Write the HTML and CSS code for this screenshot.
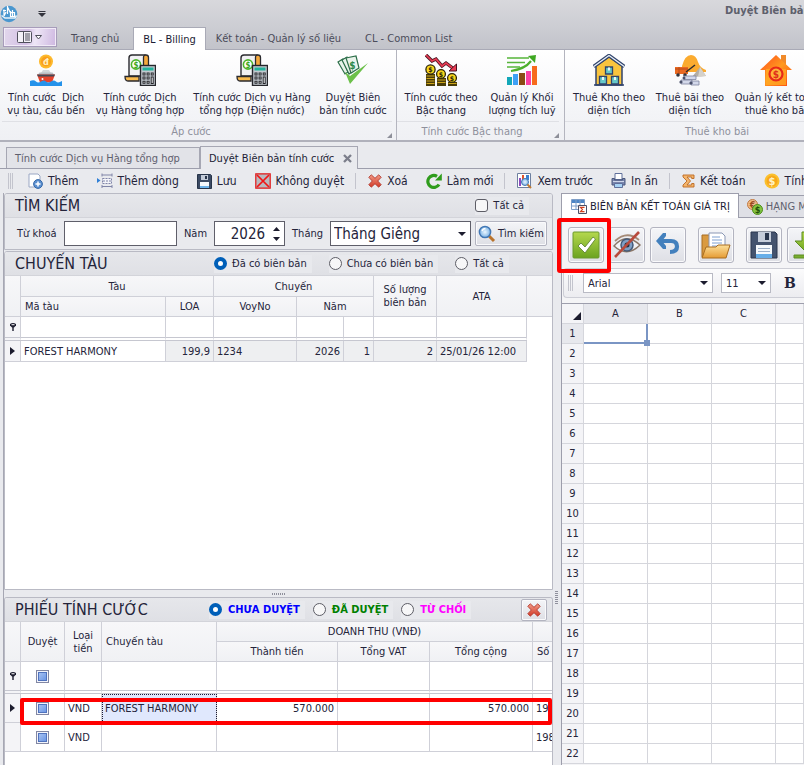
FILE: index.html
```
<!DOCTYPE html>
<html lang="vi">
<head>
<meta charset="utf-8">
<title>Duyệt Biên bản tính cước</title>
<link rel="stylesheet" href="styles.css">
</head>
<body>
<svg class="defs" aria-hidden="true">
  <defs>
    <linearGradient id="gFire" x1="0" y1="0" x2="1" y2="1"><stop offset="0" stop-color="#ff4a1c"/><stop offset=".5" stop-color="#ff9a1f"/><stop offset="1" stop-color="#ff4a10"/></linearGradient>
    <linearGradient id="gGreen" x1="0" y1="0" x2="0" y2="1"><stop offset="0" stop-color="#b5d84e"/><stop offset="1" stop-color="#6ba31f"/></linearGradient>
    <linearGradient id="gFold" x1="0" y1="0" x2="0" y2="1"><stop offset="0" stop-color="#fde09a"/><stop offset="1" stop-color="#e59b34"/></linearGradient>
    <radialGradient id="gLens"><stop offset="0" stop-color="#eaf6ff"/><stop offset="1" stop-color="#7db4e6"/></radialGradient>
    <linearGradient id="gRed" x1="0" y1="0" x2="0" y2="1"><stop offset="0" stop-color="#f29a86"/><stop offset="1" stop-color="#d23a28"/></linearGradient>
    <symbol id="calc" viewBox="0 0 32 32">
      <path d="M5 22V4q0-3 3-3h13v21z" fill="#f1f1f3" stroke="#2a2a2e" stroke-width="1.4"/>
      <path d="M19.500 12V3.500q0-2.500 2.500-2.500t2.500 2.500V12z" fill="#f5a93c" stroke="#2a2a2e" stroke-width="1.300"/>
      <circle cx="12" cy="10.500" r="4.600" fill="#fff" stroke="#4db62c" stroke-width="1.600"/>
      <text x="12" y="13.500" font-size="8" font-weight="bold" text-anchor="middle" fill="#3fa622">$</text>
      <path d="M1 22.500h14v4.500H4q-3 0-3-4.500z" fill="#f9bb4e" stroke="#2a2a2e" stroke-width="1.300"/>
      <rect x="16.500" y="11.500" width="15" height="20" fill="#c3c9cf" stroke="#25262b" stroke-width="1.400"/>
      <rect x="18.500" y="13.500" width="11" height="3" fill="#22b39c"/>
      <g fill="#25262b"><path d="M18.500 18.500h3v3h-3zM22.600 18.500h3v3h-3zM26.700 18.500h3v3h-3zM18.500 22.600h3v3h-3zM22.600 22.600h3v3h-3zM26.700 22.600h3v7.300h-3zM18.500 26.800h3v3h-3zM22.600 26.800h3v3h-3z"/></g>
      <g fill="#f2f4f6"><path d="M19.500 19.500h1v1h-1zM23.600 19.500h1v1h-1zM27.700 19.500h1v1h-1zM19.500 23.600h1v1h-1zM23.600 23.600h1v1h-1zM27.700 23.600h1v5.300h-1zM19.500 27.800h1v1h-1zM23.600 27.800h1v1h-1z"/></g>
    </symbol>
    <symbol id="pin" viewBox="0 0 8 10"><path d="M1 2q3-2 6 0v1.500L5 5.500H3L1 3.500z" fill="#1c1c2e"/><path d="M2.500 2.200h3v1h-3z" fill="#fff"/><path d="M3.300 5h1.400v4H3.300z" fill="#1c1c2e"/></symbol>
    <symbol id="cross" viewBox="0 0 14 14"><path d="M3.300.8 7 4.300 10.700.8l2.500 2.500L9.700 7l3.500 3.700-2.500 2.500L7 9.700l-3.700 3.500-2.500-2.500L4.300 7 .8 3.300z" fill="url(#gRed)" stroke="#b23a30" stroke-width=".9"/></symbol>
  </defs>
</svg>

<header class="titlebar">
  <svg class="logo" width="18" height="18" viewBox="0 0 18 18"><circle cx="9" cy="9" r="8.300" fill="#4a97cf"/><path d="M7.500 1v8M4 4.500v6.500M3 5.500h3M6 7l-2 4M7.500 2 11 9M10.500 6v6M12.500 5v7M10.500 7.500h4v4h-4" stroke="#fff" stroke-width="1.200" fill="none"/><path d="M1.500 10.500 5 13h10l1.500-2.500" stroke="#e6f3fb" stroke-width="1.500" fill="none"/></svg>
  <svg class="quick" width="8" height="6" viewBox="0 0 8 6"><path d="M.5 0h7v1h-7zM0 2h8L4 6z" fill="#33343d"/></svg>
  <h1 class="title">Duyệt Biên bản</h1>
</header>

<nav class="tabs">
  <button class="appbtn" aria-label="Menu">
    <svg width="26" height="12" viewBox="0 0 26 12"><rect x=".5" y=".5" width="14" height="11" rx="1" fill="#f4f2f8" stroke="#50505c"/><path d="M6.500 1v10" stroke="#50505c"/><path d="M8 3h5M8 5h5M8 7h5M8 9h5" stroke="#50505c"/><path d="M18.500 4.500h6L21.500 8z" fill="#fff" stroke="#50505c"/></svg>
  </button>
  <a class="tab" href="#home">Trang chủ</a>
  <a class="tab on" href="#billing">BL - Billing</a>
  <a class="tab" href="#settle">Kết toán - Quản lý số liệu</a>
  <a class="tab" href="#common">CL - Common List</a>
</nav>

<section class="ribbon">
  <div class="group">
    <div class="items">
      <button class="big w88"><svg width="32" height="32" viewBox="0 0 32 32"><circle cx="16" cy="7.500" r="7" fill="#fdb92c"/><circle cx="16" cy="7.500" r="5" fill="#f9a01b"/><text x="16" y="11" font-size="9" font-weight="bold" text-anchor="middle" fill="#fff0c0">đ</text><path d="M13 16h6l2 3H11z" fill="#d3d6da"/><path d="M9.500 18.500h13l1.500 2H8z" fill="#b9bdc4"/><path d="M7 20.500h18l-3 8H10z" fill="#e5432d"/><path d="M7 20.500h18l-1 2H8z" fill="#454a57"/><circle cx="12.500" cy="25" r="1" fill="#fff"/><path d="M0 27q4-1.500 6 .500t5 0 5 0 5 0 5 0 6-.500v5H0z" fill="#2492ea"/></svg><span>Tính cước&nbsp; Dịch<br>vụ tàu, cầu bến</span></button>
      <button class="big w100"><svg width="32" height="32"><use href="#calc"/></svg><span>Tính cước Dịch<br>vụ Hàng tổng hợp</span></button>
      <button class="big w124"><svg width="32" height="32"><use href="#calc"/></svg><span>Tính cước Dịch vụ Hàng<br>tổng hợp (Điện nước)</span></button>
      <button class="big w78"><svg width="32" height="32" viewBox="0 0 32 32"><g fill="#e9f3ea" stroke="#2c6e49" stroke-width="1.200"><path d="m1 8 5-3 5 13-3 2z"/><path d="m5 6 5-3 6 14-4 3z"/><path d="m9 4 10-2 3 12-8 5z"/></g><text x="15.500" y="14.500" font-size="10" font-weight="bold" text-anchor="middle" fill="#2c8a4a">$</text><path d="M8 18 13 22 31 9 13 30z" fill="#6cc04a"/></svg><span>Duyệt Biên<br>bản tính cước</span></button>
    </div>
    <div class="caption"><span>Áp cước</span><svg class="launch" width="5" height="5" viewBox="0 0 5 5"><path d="M5 0v5H0z" fill="#8d8f99"/></svg></div>
  </div>
  <div class="group">
    <div class="items">
      <button class="big w88"><svg width="32" height="32" viewBox="0 0 32 32"><g fill="#4a3d08"><path d="M1 20h9v12H1zM12 24h9v8h-9zM23 28h9v4h-9z"/></g><path d="M1.500 22h8M1.500 24.500h8M1.500 27h8M1.500 29.500h8M12.500 26h8M12.500 28.500h8M23.500 29.500h8" stroke="#cda51a"/><g fill="#f9d71c" stroke="#2d2508" stroke-width="1.300"><circle cx="5.500" cy="15.500" r="4.600"/><circle cx="16" cy="20" r="4.400"/><circle cx="27" cy="24" r="4.400"/></g><g font-size="7" font-weight="bold" text-anchor="middle" fill="#2d2508"><text x="5.500" y="18">$</text><text x="16" y="22.500">$</text><text x="27" y="26.500">$</text></g><path d="m1 1 6 6 4-2 6 7 4-3 8 6" fill="none" stroke="#4a1420" stroke-width="3.400"/><path d="m1 1 6 6 4-2 6 7 4-3 8 6" fill="none" stroke="#ea3d55" stroke-width="1.700"/><path d="M31.500 10v7H24z" fill="#ea3d55" stroke="#4a1420"/></svg><span>Tính cước theo<br>Bậc thang</span></button>
      <button class="big w74"><svg width="32" height="32" viewBox="0 0 32 32"><path d="M1 4h22M1 8.500h18M1 13h13" stroke="#56b53a" stroke-width="1.300"/><path d="M5 17Q19 15 25 7" fill="none" stroke="#4db02c" stroke-width="2.200"/><path d="M22 2l8-1-1 8z" fill="#3fa822"/><path d="M1 23h5v8H1z" fill="#12a7b8"/><path d="M7 20h5v11H7z" fill="#3ea0f5"/><path d="M13 19h6v12h-6z" fill="#8a4a14"/><path d="M20 17h5v14h-5z" fill="#fb3fa5"/><path d="M26 12h5v19h-5z" fill="#f76a1c"/></svg><span>Quản lý Khối<br>lượng tích luỹ</span></button>
    </div>
    <div class="caption"><span>Tính cước Bậc thang</span><svg class="launch" width="5" height="5" viewBox="0 0 5 5"><path d="M5 0v5H0z" fill="#8d8f99"/></svg></div>
  </div>
  <div class="group last">
    <div class="items">
      <button class="big w88"><svg width="32" height="32" viewBox="0 0 32 32"><path d="M3 12 16 3l13 9v19H3z" fill="#f9c43e" stroke="#31436b" stroke-width="1.500"/><path d="M.8 12.500 16 1.500l15.200 11" fill="none" stroke="#31436b" stroke-width="3.600"/><path d="M.8 12.500 16 1.500l15.200 11" fill="none" stroke="#e9f1f8" stroke-width="1.300"/><g fill="#66c8c8" stroke="#31436b" stroke-width="1.300"><path d="M12.500 13h7v7h-7zM6.500 22.500h7V30h-7zM18.500 22.500h7V30h-7z"/></g><path d="M15 13.500h2v3h-2zM9 23h2v3H9zM21 23h2v3h-2z" fill="#e9f7f7"/><path d="M1 31h30" stroke="#31436b" stroke-width="1.500"/></svg><span>Thuê Kho theo<br>diện tích</span></button>
      <button class="big w74"><svg width="32" height="32" viewBox="0 0 32 32"><path d="M8 12Q11 1 17 1q5 0 7 7 2 6 8 8v2H8z" fill="#fbab2f"/><path d="m18 23 8-10 6 9z" fill="#b3aea6"/><path d="m26 13 6 9-8 1z" fill="#d5d1ca"/><path d="M1 13h13v7H1z" fill="#ea6a22"/><path d="M1 15h13M5 13v7" stroke="#b84a18"/><path d="m12 18 9-7" stroke="#2c2c30" stroke-width="1.500"/><circle cx="4" cy="21" r="1.800" fill="#33343c"/><circle cx="11" cy="21" r="1.800" fill="#33343c"/><g fill="#d3d8ea" stroke="#7d849e" stroke-width=".8"><path d="M10 22h12v3.500H10zM7 26h11v4H7zM17 27h8v4h-8z"/></g><g fill="#4b516b"><circle cx="10" cy="24" r="1.500"/><circle cx="7" cy="28" r="1.600"/><circle cx="17" cy="29" r="1.600"/></g></svg><span>Thuê bãi theo<br>diện tích</span></button>
      <button class="big w98"><svg width="32" height="32" viewBox="0 0 32 32"><path d="M21 1h5v10h-5z" fill="#f08a2a"/><path d="M16 1 32 16h-5v16H5V16H0z" fill="url(#gFire)"/><path d="M6 15h20v16H6z" fill="#ffab24" opacity=".75"/><circle cx="16" cy="20" r="6.500" fill="#ffb43a" stroke="#e8291a" stroke-width="2.200"/><text x="16" y="23.800" font-size="10" font-weight="bold" text-anchor="middle" fill="#e0301a">$</text></svg><span>Quản lý kết toán<br>thuê kho bãi</span></button>
    </div>
    <div class="caption"><span>Thuê kho bãi</span></div>
  </div>
</section>

<nav class="docs">
  <a class="doc" href="#general">Tính cước Dịch vụ Hàng tổng hợp</a>
  <a class="doc on" href="#approve">Duyệt Biên bản tính cước <svg width="9" height="9" viewBox="0 0 9 9"><path d="m1 1 7 7M8 1 1 8" stroke="#7c7e8b" stroke-width="2.300"/></svg></a>
</nav>

<div class="toolbar">
  <span class="grip"></span>
  <button><svg width="15" height="16" viewBox="0 0 15 16"><path d="M1 1h9l2 2v11H1z" fill="#fff" stroke="#9aa7c4"/><circle cx="10" cy="11" r="4.400" fill="#5a8fd0" stroke="#3568a8"/><path d="M10 8.500v5M7.500 11h5" stroke="#fff" stroke-width="1.500"/></svg>Thêm</button>
  <button><svg width="16" height="16" viewBox="0 0 16 16"><path d="m0 5 3.500 2.500L0 10z" fill="#2f7fd6"/><path d="M5 2h10M5 13.500h10M5 .5v3M15 .5v3M5 12v3M15 12v3" stroke="#8085a8" fill="none"/><path d="M5.500 5.500h9v5h-9z" fill="#f4f5fa" stroke="#8085a8" stroke-dasharray="2 1"/><path d="M6 8h8" stroke="#8085a8" stroke-dasharray="2 1"/></svg>Thêm dòng</button>
  <button><svg width="15" height="15" viewBox="0 0 15 15"><path d="M.5.5h13l1 1v13H.5z" fill="#3b4a63" stroke="#273449"/><path d="M4 1h7v5H4z" fill="#c3cbd8"/><path d="M8 2h2v3H8z" fill="#273449"/><path d="M3 8h9v6H3z" fill="#f4f8fc"/><path d="M3 12h9v2H3z" fill="#6db3ea"/></svg>Lưu</button>
  <button><svg width="16" height="16" viewBox="0 0 16 16"><path d="M.8.8h14.400v14.400H.8z" fill="#b9b9be" stroke="#e31616" stroke-width="1.200"/><path d="m2 2 12 12M14 2 2 14" stroke="#f21414" stroke-width="1.700"/></svg>Không duyệt</button>
  <span class="sep"></span>
  <button><svg width="14" height="14"><use href="#cross"/></svg>Xoá</button>
  <button><svg width="16" height="16" viewBox="0 0 16 16"><path d="M13 11.500A6 6 0 1 1 11 3.300" fill="none" stroke="#2f9c1c" stroke-width="3.200"/><path d="M15.800.5v7H9z" fill="#2f9c1c"/></svg>Làm mới</button>
  <span class="sep"></span>
  <button><svg width="15" height="16" viewBox="0 0 15 16"><path d="M.5.5h13v14H.5z" fill="#fff" stroke="#6d7f9f"/><path d="M2 5h2v8H2z" fill="#8d4ac0"/><path d="M5 2h2v6H5z" fill="#e0532c"/><path d="M9 2h3v5H9z" fill="#3c7fd0"/><circle cx="8" cy="9" r="3.500" fill="url(#gLens)" stroke="#4277b4"/><path d="m10.500 11.500 3.500 3.500" stroke="#c07a30" stroke-width="2"/></svg>Xem trước</button>
  <button><svg width="15" height="16" viewBox="0 0 15 16"><path d="M4 .5h7v6H4z" fill="#fff" stroke="#5f6f9a"/><path d="M1 5.500h2.500V7h8V5.500H14V12H1z" fill="#7a86ad" stroke="#4b587f"/><path d="M2 8.500h11" stroke="#cfd6ea"/><path d="M3.500 10.500h8v4h-8z" fill="#a8d2f4" stroke="#5f6f9a"/></svg>In ấn</button>
  <span class="sep"></span>
  <button><svg width="13" height="14" viewBox="0 0 13 14"><path d="M1 1h11v3.500h-2.300V3H5l3.500 4L5 11h4.700V9.500H12V13H1v-2l4-4-4-4z" fill="#f4b56c" stroke="#bb6a22" stroke-width=".9"/></svg>Kết toán</button>
  <button><svg width="16" height="16" viewBox="0 0 16 16"><circle cx="8" cy="8" r="7.500" fill="#fbc02d"/><circle cx="8" cy="8" r="5.500" fill="#f7a81b"/><text x="8" y="12" font-size="11" font-weight="bold" text-anchor="middle" fill="#fff3c4">$</text></svg>Tính</button>
</div>

<main class="work">
  <div class="left">
    <section class="panel">
      <div class="head"><h2>TÌM KIẾM</h2><label class="opt push"><input type="checkbox">Tất cả</label></div>
      <form class="search">
        <label for="kw">Từ khoá</label><input id="kw" class="kw" type="text">
        <label for="yr">Năm</label><span class="spin"><input id="yr" type="text" inputmode="numeric" value="2026"><svg width="7" height="16" viewBox="0 0 7 16"><path d="M3.500 1 7 5H0zM3.500 15 7 11H0z" fill="#1c1c2e"/></svg></span>
        <label for="mo">Tháng</label><select id="mo" class="mo"><option>Tháng Giêng</option></select>
        <button type="button" class="find"><svg width="18" height="18" viewBox="0 0 18 18"><path d="m11 11 5 5" stroke="#b9732c" stroke-width="3"/><circle cx="7" cy="7" r="5.600" fill="url(#gLens)" stroke="#4277b4" stroke-width="1.500"/><path d="M4 6q1-2.500 3.500-2.500" stroke="#fff" stroke-width="1.300" fill="none"/></svg>Tìm kiếm</button>
      </form>
    </section>

    <section class="panel grow">
      <div class="head"><h2 class="lead">CHUYẾN TÀU</h2>
        <div class="opts">
          <label class="opt"><input type="radio" name="trip" checked>Đã có biên bản</label>
          <label class="opt"><input type="radio" name="trip">Chưa có biên bản</label>
          <label class="opt"><input type="radio" name="trip">Tất cả</label>
        </div>
      </div>
      <table class="grid trips">
        <colgroup><col class="c16"><col class="c145"><col class="c48"><col class="c83"><col class="c47"><col class="c30"><col class="c63"><col class="c90"><col></colgroup>
        <thead>
          <tr><th rowspan="2"></th><th colspan="2">Tàu</th><th colspan="3">Chuyến</th><th rowspan="2">Số lượng<br>biên bản</th><th rowspan="2">ATA</th><th rowspan="2" class="rest"></th></tr>
          <tr><th class="l">Mã tàu</th><th>LOA</th><th>VoyNo</th><th colspan="2">Năm</th></tr>
        </thead>
        <tbody>
          <tr class="filter"><td class="mark"><svg width="8" height="10"><use href="#pin"/></svg></td><td></td><td></td><td></td><td></td><td></td><td></td><td></td><td class="rest"></td></tr>
          <tr class="cur"><td class="mark"><svg width="5" height="8" viewBox="0 0 5 8"><path d="M0 0l5 4-5 4z" fill="#1c1c2e"/></svg></td><td class="sel">FOREST HARMONY</td><td class="r">199,9</td><td>1234</td><td class="r">2026</td><td class="r">1</td><td class="r">2</td><td>25/01/26 12:00</td><td class="rest"></td></tr>
        </tbody>
      </table>
    </section>

    <div class="hsplit"><span></span></div>

    <section class="panel bottom">
      <div class="head"><h2 class="lead">PHIẾU TÍNH CƯỚC</h2>
        <div class="opts tight">
          <label class="opt blue"><input type="radio" name="slip" checked>CHƯA DUYỆT</label>
          <label class="opt green"><input type="radio" name="slip">ĐÃ DUYỆT</label>
          <label class="opt pink"><input type="radio" name="slip">TỪ CHỐI</label>
        </div>
        <button class="del" aria-label="Xoá phiếu"><svg width="14" height="14"><use href="#cross"/></svg></button>
      </div>
      <table class="grid slips">
        <colgroup><col class="c16"><col class="c44"><col class="c37"><col class="c115"><col class="c121"><col class="c92"><col class="c103"><col></colgroup>
        <thead>
          <tr><th rowspan="2"></th><th rowspan="2">Duyệt</th><th rowspan="2">Loại<br>tiền</th><th rowspan="2" class="l">Chuyến tàu</th><th colspan="3">DOANH THU (VNĐ)</th><th class="rest"></th></tr>
          <tr><th>Thành tiền</th><th>Tổng VAT</th><th>Tổng cộng</th><th class="l rest">Số</th></tr>
        </thead>
        <tbody>
          <tr class="filter"><td class="mark"><svg width="8" height="10"><use href="#pin"/></svg></td><td class="m"><input type="checkbox" class="tri" aria-label="Lọc duyệt"></td><td></td><td></td><td></td><td></td><td></td><td class="rest"></td></tr>
          <tr class="hot"><td class="mark"><svg width="5" height="8" viewBox="0 0 5 8"><path d="M0 0l5 4-5 4z" fill="#1c1c2e"/></svg><i class="frame"></i></td><td class="m"><input type="checkbox" class="tri" aria-label="Duyệt dòng 1"></td><td>VND</td><td class="focus">FOREST HARMONY</td><td class="r">570.000</td><td></td><td class="r">570.000</td><td class="rest">199</td></tr>
          <tr><td class="mark"></td><td class="m"><input type="checkbox" class="tri" aria-label="Duyệt dòng 2"></td><td>VND</td><td></td><td></td><td></td><td></td><td class="rest">198</td></tr>
        </tbody>
      </table>
    </section>
  </div>

  <div class="vsplit"><span></span></div>

  <div class="right">
    <nav class="subtabs">
      <a class="sub on" href="#value"><svg width="16" height="16" viewBox="0 0 16 16"><path d="M.5 1.500h13v10H.5z" fill="#fff" stroke="#7f9fc8"/><path d="M1 2h12v3H1z" fill="#4d86c6"/><path d="M5 2v9M9 2v9M1 8h12" stroke="#7f9fc8"/><path d="M7.500 7.500h8v8h-8z" fill="#fff" stroke="#4a4f66"/><path d="M13.500 9.300h-4l2 2.200-2 2.200h4" fill="none" stroke="#d0401f" stroke-width="1.200"/></svg>BIÊN BẢN KẾT TOÁN GIÁ TRỊ</a>
      <a class="sub" href="#items"><svg width="16" height="16" viewBox="0 0 16 16"><circle cx="5.500" cy="5.500" r="5" fill="#eeb988" stroke="#c07a44"/><text x="5.500" y="9" font-size="9" font-weight="bold" text-anchor="middle" fill="#9c4c20">€</text><circle cx="10.500" cy="10.500" r="5" fill="#86c440" stroke="#4c8c1c"/><text x="10.500" y="14" font-size="9" font-weight="bold" text-anchor="middle" fill="#205008">$</text></svg>HẠNG M</a>
    </nav>
    <div class="page">
      <div class="actions">
        <div class="set">
          <span class="hl"><button aria-label="Duyệt"><svg width="28" height="28" viewBox="0 0 28 28"><rect x="1" y="1" width="26" height="26" rx="1" fill="url(#gGreen)" stroke="#6a9a2c"/><path d="m6 15 3-3 4 4 8-10 2.500 2L13 22z" fill="#fff" stroke="#557a2c" stroke-width=".8"/></svg></button></span>
          <button aria-label="Ẩn"><svg width="28" height="28" viewBox="0 0 28 28"><path d="M1 15Q13 1 27 14 14 27 1 15z" fill="#f2f3f6" stroke="#8b7768" stroke-width="1.500"/><circle cx="14" cy="14" r="6" fill="#7f9fc4" stroke="#445a78" stroke-width="1.500"/><circle cx="14" cy="14" r="2.500" fill="#26303f"/><path d="M2 10Q14-1 26 9" fill="none" stroke="#a58a76" stroke-width="1.800"/><path d="M2 26 26 1" stroke="#b84a3c" stroke-width="2.600"/></svg></button>
          <button aria-label="Hoàn tác"><svg width="28" height="28" viewBox="0 0 28 28"><path d="M7 10h10q6 0 6 5.500T16 21" fill="none" stroke="#4380bd" stroke-width="4.200"/><path d="M12 2v3L8 10l4 5v3H9L2 10l7-8z" fill="#4380bd"/></svg></button>
        </div>
        <div class="set"><button aria-label="Mở"><svg width="30" height="28" viewBox="0 0 30 28"><path d="M1 26V4h9l2 2h4v20z" fill="#d99a40" stroke="#a86c20"/><path d="M8 2h13l3 3v16H8z" fill="#fff" stroke="#8a97b4"/><path d="M11 6h8M11 9h10M11 12h10M11 15h10" stroke="#7fa0d0"/><path d="M1 27 5 16h10l2-2h12l-4 13z" fill="url(#gFold)" stroke="#a86c20"/></svg></button></div>
        <div class="set">
          <button aria-label="Lưu tệp"><svg width="28" height="28" viewBox="0 0 28 28"><path d="M1 1h24l2 2v24H1z" fill="#44536e" stroke="#2a374e"/><path d="M8 1h13v10H8z" fill="#c6cedb"/><path d="M15 2h4v7h-4z" fill="#2a374e"/><path d="M6 14h16v13H6z" fill="#f6f9fc"/><path d="M8 17.500h12M8 20.500h12" stroke="#9db0c8"/><path d="M6 23h16v4H6z" fill="#67aee8"/></svg></button>
          <button aria-label="Xuất"><svg width="28" height="28" viewBox="0 0 28 28"><path d="M11 1h8v9h6L15 21 4 10h7z" fill="url(#gGreen)" stroke="#5c8c22"/><path d="M3 24h22v3H3z" fill="#79ad2e" stroke="#5c8c22"/></svg></button>
        </div>
      </div>
      <div class="format">
        <span class="grip"></span>
        <select class="font" aria-label="Phông chữ"><option>Arial</option></select>
        <select class="size" aria-label="Cỡ chữ"><option>11</option></select>
        <button class="bold" aria-label="Đậm">B</button>
      </div>
      <table class="sheet">
        <thead><tr><th class="corner"><svg width="8" height="8" viewBox="0 0 8 8"><path d="M8 0v8H0z" fill="#1c1c2e"/></svg></th><th class="act">A</th><th>B</th><th>C</th><th></th></tr></thead>
        <tbody id="rows"></tbody>
      </table>
    </div>
  </div>
</main>
<script src="sheet.js"></script>
</body>
</html>
```
FILE: styles.css
```
* { box-sizing: border-box; }
body {
  margin: 0;
  height: 100vh;
  display: flex;
  flex-direction: column;
  overflow: hidden;
  background: #e9eaee;
  color: #24243a;
  font: 11px/13px "DejaVu Sans Condensed", "DejaVu Sans", sans-serif;
}
button, input, select { font: inherit; color: inherit; margin: 0; }
button { border: 0; background: none; padding: 0; }
a { color: inherit; text-decoration: none; }
svg { display: block; flex: none; }
h1, h2 { margin: 0; font-weight: normal; }
.defs { position: absolute; width: 0; height: 0; }

/* Title bar and ribbon tabs */
.titlebar {
  flex: none;
  height: 27px;
  display: flex;
  align-items: center;
  background: linear-gradient(#d8d8dc, #cccdd3);
}
.quick { margin-left: 20px; }
.title {
  margin-left: auto;
  flex: 0 0 79px;
  height: 20px;
  overflow: hidden;
  white-space: nowrap;
  font: bold 11px/14px "DejaVu Sans Condensed", sans-serif;
  color: #5d606c;
}
.tabs {
  flex: none;
  height: 23px;
  display: flex;
  align-items: flex-end;
  gap: 4px;
  padding-left: 3px;
  background: linear-gradient(#cccdd3, #c2c3ca);
  border-bottom: 1px solid #a9aab6;
}
.appbtn {
  align-self: flex-start;
  width: 54px;
  height: 20px;
  display: grid;
  place-items: center;
  border: 1px solid #a79cba;
  background: linear-gradient(100deg, #e2d8ec, #d3bfe4 45%, #eee6f6 60%, #cdb6e0);
  box-shadow: inset 0 0 0 1px #f1ebf7;
}
.tab { padding: 6px 10px 4px; height: 23px; color: #4b4c5a; white-space: nowrap; }
.tab.on {
  margin: 0 -4px -1px 0;
  padding: 5px 9px;
  background: #fff;
  color: #1c1c34;
  border: 1px solid #a9aab6;
  border-bottom: 0;
}

/* Ribbon */
.ribbon {
  flex: none;
  display: flex;
  overflow: hidden;
  background: linear-gradient(#fff, #f3f4f7 70%, #eff0f4);
  border-bottom: 2px solid #b0b1bb;
}
.group { flex: none; border-right: 1px solid #b4b5bf; }
.group:first-child { padding: 0 4px 0 2px; }
.group:nth-child(2) { padding-right: 5px; }
.items { display: flex; height: 71px; padding-top: 4px; }
.last .items { padding-right: 44px; }
.big { display: flex; flex-direction: column; align-items: center; gap: 5px; line-height: 13px; white-space: nowrap; }
.w74 { width: 74px; }
.w78 { width: 78px; }
.w88 { width: 88px; }
.w98 { width: 98px; }
.w100 { width: 100px; }
.w124 { width: 124px; }
.caption {
  position: relative;
  height: 19px;
  padding: 3px 12px 0 0;
  text-align: center;
  color: #8e909c;
  border-top: 1px solid #dfe0e5;
}
.last .caption { padding-right: 0; }
.launch { position: absolute; right: 0; bottom: 2px; }

/* Document tabs */
.docs {
  flex: none;
  display: flex;
  align-items: flex-end;
  height: 27px;
  padding-left: 6px;
  border-bottom: 1px solid #9d9eac;
}
.doc {
  width: 194px;
  height: 21px;
  padding: 4px 8px;
  white-space: nowrap;
  color: #5f606e;
  border: 1px solid #a6a7b3;
  border-bottom: 0;
  background: #e2e3e8;
}
.doc.on {
  width: auto;
  height: 23px;
  margin-bottom: -1px;
  display: flex;
  align-items: center;
  gap: 9px;
  padding: 0 5px 0 8px;
  color: #1c1c34;
  background: #e9eaee;
}

/* Toolbar */
.toolbar {
  flex: none;
  display: flex;
  align-items: center;
  height: 24px;
  overflow: hidden;
  padding-left: 8px;
  font-size: 12px;
}
.toolbar button { flex: none; display: flex; align-items: center; gap: 5px; padding: 0 9px; white-space: nowrap; }
.grip { flex: none; width: 6px; height: 16px; margin-right: 5px; background: repeating-linear-gradient(90deg, #c3c4cd 0 1px, transparent 1px 2px); }
.sep { flex: none; width: 1px; height: 16px; margin: 0 3px 0 2px; background: #c3c4cd; }

/* Work area */
.work { flex: 1; min-height: 0; display: flex; }
.left { flex: 0 1 550px; min-width: 0; margin-left: 3px; display: flex; flex-direction: column; border-left: 1px solid #a6a7b3; }
.panel { flex: none; border: 1px solid #b9bac4; border-radius: 3px 3px 0 0; overflow: hidden; }
.panel + .panel { margin-top: 1px; }
.panel.grow { flex: 1; background: #fff; }
.head {
  display: flex;
  align-items: center;
  height: 24px;
  padding: 0 5px 0 10px;
  background: linear-gradient(#e6e7eb, #dfe0e5);
  border-bottom: 1px solid #d3d4da;
}
.head h2 { font-size: 16px; line-height: 23px; white-space: nowrap; }
.head .lead { flex: 0 0 199px; }
.bottom .head .lead { flex-basis: 194px; }
.opts { display: flex; gap: 17px; }
.opts.tight { gap: 8px; font-weight: bold; }
.opt { display: flex; align-items: center; gap: 5px; padding-right: 5px; height: 18px; background: #e8e9ed; white-space: nowrap; }
.tight .opt { gap: 6px; }
.push { margin-left: auto; margin-right: 18px; }
.blue { color: #00f; }
.green { color: #008000; }
.pink { color: #f0f; }
.opt input { appearance: none; width: 13px; height: 13px; border: 1px solid #5d5d66; background: #f7f7f8; }
.opt input[type="radio"] { border-radius: 50%; }
.opt input[type="checkbox"] { border-radius: 3px; }
.opt input:checked { border: 4px solid #005fb8; background: #fff; }
.search { display: flex; align-items: center; height: 31px; padding: 0 5px 0 12px; }
.search label { flex: none; margin-right: 7px; }
.kw, .spin, .mo { height: 25px; border: 1px solid #5f5f6a; background: #fff; margin-right: 7px; border-radius: 0; }
.kw { flex: 1 1 115px; min-width: 40px; }
.spin { flex: none; width: 71px; display: flex; align-items: center; padding-right: 4px; }
.spin input { flex: 1; min-width: 0; border: 0; padding: 0; text-align: right; font-size: 15px; line-height: 20px; background: none; }
.spin svg { margin-left: 8px; }
.mo, .font, .size {
  appearance: none;
  border-radius: 0;
  background: #fff url("data:image/svg+xml,%3Csvg xmlns='http://www.w3.org/2000/svg' width='8' height='4'%3E%3Cpath d='M0 0h8L4 4z' fill='%231c1c2e'/%3E%3C/svg%3E") no-repeat right 4px center;
}
.mo { flex: none; width: 141px; margin-right: 4px; padding: 0 3px; font-size: 15px; line-height: 22px; }
.find {
  flex: none;
  width: 72px;
  height: 25px;
  display: flex;
  align-items: center;
  gap: 2px;
  padding-left: 2px;
  white-space: nowrap;
}
.find, .del, .actions button { border: 1px solid #b3b4c0; border-radius: 2px; background: linear-gradient(#f4f5f8, #dedfe5); box-shadow: inset 0 0 0 1px #fafafc; }
.del { margin-left: auto; width: 26px; height: 22px; display: grid; place-items: center; }

/* Data grids */
.grid { width: 100%; table-layout: fixed; border-collapse: separate; border-spacing: 0; background: #fff; }
.grid th, .grid td { padding: 0 3px; border: solid #cfd0d8; border-width: 0 1px 1px 0; font-weight: normal; overflow: hidden; white-space: nowrap; }
.grid th { background: linear-gradient(#f7f7f9, #f0f1f4); padding: 0; line-height: 13px; }
.grid .l { text-align: left; padding-left: 4px; }
.grid .r { text-align: right; }
.grid .m, .grid .mark { padding: 0; text-align: center; }
.grid .mark { background: #f4f4f7; }
.mark svg, .m input { margin: 0 auto; }
.grid .rest { border-right: 0; }
.trips td.rest { border: 0; }
.trips thead tr:first-child th { height: 21px; }
.trips thead tr + tr th { height: 20px; }
.trips .filter td { height: 24px; }
.trips .cur td { height: 21px; }
.grid .filter td { border-bottom: 4px double #c6c7d0; }
.trips .filter td.rest { border-bottom: 0; }
.cur td { background: #eeeff1; }
.cur td.sel, .cur td.rest { background: #fff; }
.slips thead th { height: 20px; }
.slips .filter td { height: 32px; }
.slips tbody td { height: 29px; }
.hot { position: relative; }
.grid td.focus { background: #e0e8fd; outline: 1px dotted #1c1c34; outline-offset: -1px; }
.tri {
  appearance: none;
  display: block;
  width: 13px;
  height: 13px;
  border: 1px solid #8287a3;
  background: linear-gradient(135deg, #b6cdf6, #5b8ae0);
  box-shadow: inset 0 0 0 1px #f2f4fb, inset 0 0 0 2px #4f72bd;
}
.frame { position: absolute; left: 15px; right: 0; top: 4px; height: 27px; border: 4px solid #f00; border-radius: 2px; }
.c16 { width: 16px; }
.c30 { width: 30px; }
.c37 { width: 37px; }
.c44 { width: 44px; }
.c47 { width: 47px; }
.c48 { width: 48px; }
.c63 { width: 63px; }
.c83 { width: 83px; }
.c90 { width: 90px; }
.c92 { width: 92px; }
.c103 { width: 103px; }
.c115 { width: 115px; }
.c121 { width: 121px; }
.c145 { width: 145px; }

/* Splitters */
.hsplit { flex: none; height: 7px; display: grid; place-items: center; }
.hsplit span { width: 14px; height: 2px; background: repeating-linear-gradient(90deg, #8f909c 0 1px, transparent 1px 2px); }
.panel.bottom { flex: 0 0 168px; background: #fff; border-bottom: 0; }
.vsplit { flex: none; width: 8px; padding-left: 2px; display: flex; align-items: center; }
.vsplit span { width: 3px; height: 14px; margin-top: 238px; background: repeating-linear-gradient(#8f909c 0 1px, transparent 1px 2px); }

/* Spreadsheet side */
.right { flex: 1 1 0; min-width: 0; display: flex; flex-direction: column; }
.subtabs { flex: none; display: flex; align-items: flex-end; height: 25px; border-bottom: 1px solid #9d9eac; }
.sub { flex: none; display: flex; align-items: center; gap: 3px; height: 22px; padding: 0 8px; border: 1px solid #9d9eac; border-width: 1px 1px 0 0; background: #dfe0e6; color: #5f606e; white-space: nowrap; }
.sub.on { height: 25px; margin-bottom: -1px; border-left-width: 1px; background: #fff; color: #1c1c34; padding: 0 8px 0 9px; }
.page { flex: 1; min-height: 0; display: flex; flex-direction: column; border-left: 1px solid #9d9eac; background: #f4f4f6; }
.actions { flex: none; display: flex; align-items: center; gap: 12px; height: 50px; padding: 4px 0 0 6px; }
.set { display: flex; gap: 5px; }
.actions button { flex: none; width: 36px; height: 36px; display: grid; place-items: center; border-radius: 3px; }
.hl { position: relative; }
.hl::after { content: ""; position: absolute; inset: -9px -7px -10px -11px; border: 4px solid #f00; border-radius: 3px; pointer-events: none; }
.format { flex: none; display: flex; align-items: center; height: 30px; margin: 0 0 5px 1px; padding-left: 4px; border: 1px solid #cdced6; border-right: 0; border-radius: 4px 0 0 4px; background: linear-gradient(#fbfbfc, #ececf0); }
.format .grip { margin-right: 9px; }
.font, .size { flex: none; height: 20px; border: 1px solid #b9bac4; padding: 0 4px; }
.font { width: 130px; margin-right: 8px; }
.size { width: 50px; }
.bold { margin-left: 13px; font: bold 14px "DejaVu Serif", serif; }
.sheet { table-layout: fixed; width: 100%; border-collapse: separate; border-spacing: 0; border-top: 1px solid #9d9eac; background: #fff; }
.sheet th, .sheet td { height: 20px; padding: 0; font-weight: normal; border: solid #d5d6dc; border-width: 0 1px 1px 0; }
.sheet th { width: 64px; background: #f4f4f7; }
.sheet th:last-child { width: auto; }
.sheet .corner { width: 22px; }
.sheet th.act { background: #e7e8ed; }
.corner svg { margin: 4px 2px 0 auto; }
.sheet td.cell { position: relative; border-right: 2px solid #7a95c4; border-bottom: 2px solid #7a95c4; }
.cell::after { content: ""; position: absolute; right: -4px; bottom: -4px; width: 6px; height: 6px; background: #7a95c4; }
```
FILE: sheet.js
```
const rows = document.getElementById('rows');
for (let n = 1; n <= 22; n++) {
  const tr = rows.insertRow();
  const th = document.createElement('th');
  th.textContent = n;
  if (n === 1) th.className = 'act';
  tr.append(th);
  for (let c = 0; c < 4; c++) {
    const td = tr.insertCell();
    if (n === 1 && c === 0) td.className = 'cell';
  }
}
```
